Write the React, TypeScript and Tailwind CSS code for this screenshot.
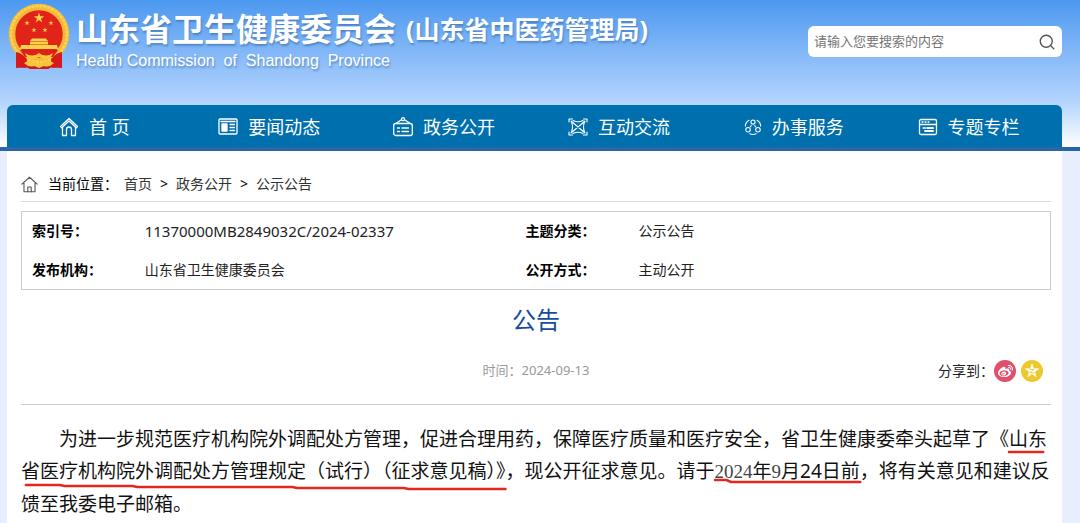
import type { ReactNode } from 'react';
import { Search } from 'lucide-react';
import { FaWeibo } from 'react-icons/fa';

interface NavItem {
    label: string;
    icon: ReactNode;
}

const iconProps = {
    viewBox: '0 0 20 20',
    fill: 'none',
    stroke: 'currentColor',
    strokeWidth: 1.3,
    strokeLinejoin: 'round' as const,
    strokeLinecap: 'round' as const,
    'aria-hidden': true,
};

const navItems: NavItem[] = [
    {
        label: '首 页',
        icon: (
            <svg {...iconProps} className="size-5">
                <path d="M1.5 9.5 10 1.5l8.500 8-1.200 1.200L10 4 2.700 10.700z" />
                <path d="M3.500 10.500v8h4v-6a2.500 2.500 0 0 1 5 0v6h4v-8" />
            </svg>
        ),
    },
    {
        label: '要闻动态',
        icon: (
            <svg {...iconProps} className="size-5">
                <rect x="1" y="2" width="18" height="15" rx="1" />
                <path d="M3 4.500h14" />
                <rect x="4" y="7" width="5" height="7" fill="currentColor" />
                <path d="M12 7.500h4.500M12 10.500h4.500M12 13.500h4.500" />
            </svg>
        ),
    },
    {
        label: '政务公开',
        icon: (
            <svg {...iconProps} className="size-5">
                <rect x="0.700" y="6.500" width="18.600" height="12" rx="2" />
                <path d="m3.500 6 5-3.200M16.500 6l-5-3.200" />
                <circle cx="10" cy="2.200" r="1.500" />
                <path d="M4.500 11h2M9 11h6.500M4.500 14.500h2M9 14.500h6.500" />
            </svg>
        ),
    },
    {
        label: '互动交流',
        icon: (
            <svg {...iconProps} className="size-5" strokeWidth={1.1}>
                <path d="m3 4 14 12M17 4 3 16M5 3.500q5 2.500 10 0M5 16.500q5-2.500 10 0M3.500 5q2 5 0 10M16.500 5q-2 5 0 10" />
                <path d="M1 5V2h3.500M15.500 2H19v3M19 15v3h-3.500M4.500 18H1v-3" />
            </svg>
        ),
    },
    {
        label: '办事服务',
        icon: (
            <svg {...iconProps} className="size-[18px]" strokeWidth={1.2}>
                <circle cx="10" cy="4.500" r="2.300" />
                <circle cx="4.500" cy="13" r="2.500" />
                <circle cx="15.500" cy="13" r="2.500" />
                <path d="M5.500 2.500Q1.500 5 1.500 9M14.500 2.500Q18.500 5 18.500 9M6.500 17.500q3.500 1.500 7 0M8 8.500 7 10M12 8.500l1 1.500" />
            </svg>
        ),
    },
    {
        label: '专题专栏',
        icon: (
            <svg {...iconProps} className="size-5">
                <rect x="1.500" y="2.500" width="17" height="15" rx="1.500" />
                <path d="M2 7.500h16M4 5h1M7 5h1M10 5h1M5 11h3" />
                <path d="M9.500 11H15M7 14h8" strokeWidth="2" />
            </svg>
        ),
    },
];

const crumbs = ['首页', '政务公开', '公示公告'];

const star = 'M0-1 .225-.309H.951L.363.118.588.809 0 .382-.588.809-.363.118-.951-.309H-.225z';

function Emblem() {
    return (
        <svg viewBox="0 0 62 68" className="h-[68px] w-[62px] shrink-0" role="img" aria-label="国徽">
            <circle cx="31" cy="31" r="25" fill="#e2231a" />
            <path d="M8 47l12 6h22l12-6v18l-10-1-4 2H22l-4-2-10 1z" fill="#d2161b" />
            <circle cx="31" cy="31" r="27" fill="none" stroke="#f3bb35" strokeWidth="6.500" />
            <circle cx="31" cy="31" r="28" fill="none" stroke="#fad25c" strokeWidth="2.500" strokeDasharray="3 1" />
            <g fill="#fbd24c">
                <path d={star} transform="translate(31 15) scale(5.500)" />
                <path d={star} transform="translate(19 20) scale(2.800)" />
                <path d={star} transform="translate(43 20) scale(2.800)" />
                <path d={star} transform="translate(26 27) scale(2.800)" />
                <path d={star} transform="translate(37 27) scale(2.800)" />
                <path d="M24 35.500h14l2 2.500H22zM22 38.500h18v3H22zM13 42h36l1 4H12z" />
            </g>
            <path d="M12 47h38l-5 7H17z" fill="#dc2119" />
            <path d="M8 49q6 1 11 7l-1 9-10-1zM54 49q-6 1-11 7l1 9 10-1z" fill="#d9181b" />
            <path d="M17 50q7 5 14 0 7 5 14 0-2 7-9 6l-5-2-5 2q-7 1-9-6z" fill="#f6c53a" />
            <path d="M16 60q6-4 11-1l4 2 4-2q5-3 11 1-5 5-10 3l-5 2-5-2q-5 2-10-3z" fill="#f6c53a" />
        </svg>
    );
}

// Text with a red marker stroke drawn under it
function Marked({ path, children }: { path: string; children: ReactNode }) {
    return (
        <span className="relative">
            {children}
            <svg
                viewBox="0 0 100 8"
                preserveAspectRatio="none"
                className="absolute top-full left-0 h-2 w-full overflow-visible"
                fill="none"
                aria-hidden="true"
            >
                <path d={path} stroke="#e3271c" strokeWidth="2.500" vectorEffect="non-scaling-stroke" strokeLinecap="round" />
            </svg>
        </span>
    );
}

function Header() {
    return (
        <header className="border-b-4 border-[#2c65a5] bg-linear-to-b from-[#4b98f0] via-[#b5d5fd] via-70% to-white">
            <div className="flex h-[105px] items-start justify-between pr-[18px] pl-2">
                <div className="flex gap-1.5 pt-[3px] text-white text-shadow-[1px_2px_2px_#3b6ca899]">
                    <Emblem />
                    <div className="pt-1">
                        <h1 className="flex items-center gap-2.5 text-[32px] leading-[44px] font-bold whitespace-nowrap">
                            山东省卫生健康委员会
                            <span className="text-[25px]">(山东省中医药管理局)</span>
                        </h1>
                        <p className="font-['Liberation_Sans'] text-base leading-5 whitespace-pre">
                            Health Commission  of  Shandong  Province
                        </p>
                    </div>
                </div>
                <form className="mt-[26px] flex h-[31px] w-[254px] items-center rounded-md bg-white px-1.5" role="search">
                    <input
                        type="text"
                        aria-label="搜索"
                        placeholder="请输入您要搜索的内容"
                        className="min-w-0 flex-1 text-[13px] outline-none placeholder:text-[#757575]"
                    />
                    <button type="button" aria-label="搜索">
                        <Search className="size-[18px] text-[#555]" strokeWidth={1.8} />
                    </button>
                </form>
            </div>
            <nav className="mr-[18px] ml-[7px] grid h-[42px] grid-cols-6 rounded-t-md bg-[#006fae] pt-0.5 pr-1.5 text-lg text-white">
                {navItems.map((item) => (
                    <a key={item.label} href="#" className="flex items-center justify-center gap-2.5 whitespace-nowrap">
                        {item.icon}
                        {item.label}
                    </a>
                ))}
            </nav>
        </header>
    );
}

function Breadcrumb() {
    return (
        <nav className="flex h-[51px] items-center border-b border-[#d9d9d9] pt-4 text-sm text-[#333]">
            <svg {...iconProps} className="mr-2.5 size-[17px] text-[#555]">
                <path d="m1 9.500 9-8 9 8M3.500 8v10.500h13V8" />
                <path d="M8 18.500v-5.500h4v5.500" />
            </svg>
            <span className="mr-1.5 text-black">当前位置：</span>
            <ol className="flex gap-2">
                {crumbs.map((crumb, i) => (
                    <li key={crumb} className="flex gap-2">
                        {i > 0 && <span className="text-black">&gt;</span>}
                        <a href="#">{crumb}</a>
                    </li>
                ))}
            </ol>
        </nav>
    );
}

function MetaTable() {
    return (
        <table className="mt-[9px] w-full table-fixed border border-[#ccc] text-left text-sm text-[#222]">
            <colgroup>
                <col className="w-[11%]" />
                <col className="w-[37%]" />
                <col className="w-[11%]" />
                <col />
            </colgroup>
            <tbody>
                <tr className="h-[39px]">
                    <th scope="row" className="pl-2.5 text-black">索引号：</th>
                    <td className="pl-2.5 text-[15px]">11370000MB2849032C/2024-02337</td>
                    <th scope="row" className="pl-2.5 text-black">主题分类：</th>
                    <td className="pl-2.5">公示公告</td>
                </tr>
                <tr className="h-[39px]">
                    <th scope="row" className="pl-2.5 text-black">发布机构：</th>
                    <td className="pl-2.5">山东省卫生健康委员会</td>
                    <th scope="row" className="pl-2.5 text-black">公开方式：</th>
                    <td className="pl-2.5">主动公开</td>
                </tr>
            </tbody>
        </table>
    );
}

export default function App() {
    return (
        <div className="min-h-screen bg-[#e8eefd] font-['Noto_Sans','Noto_Sans_CJK_SC',sans-serif]" lang="zh-CN">
            <Header />
            <main className="mr-[18px] ml-[7px] min-h-[calc(100vh-151px)] bg-white pr-[11px] pl-3.5">
                <Breadcrumb />
                <MetaTable />
                <article>
                    <h2 className="mt-3 text-center text-2xl leading-9 text-[#174b9e]">公告</h2>
                    <div className="mt-[22px] grid grid-cols-3 items-center border-b border-[#ccc] pb-[22px]">
                        <p className="col-start-2 text-center text-[13px] text-[#999]">时间：2024-09-13</p>
                        <div className="flex items-center justify-end pr-2 text-sm text-[#222]">
                            <span>分享到：</span>
                            <div className="flex gap-[5px]">
                                <button type="button" aria-label="分享到微博" className="flex size-[22px] items-center justify-center rounded-full bg-[#e0506b] text-white">
                                    <FaWeibo size={15} />
                                </button>
                                <button type="button" aria-label="分享到QQ空间" className="flex size-[22px] items-center justify-center rounded-full bg-[#ebc92f]">
                                    <svg viewBox="-1 -1 2 2" className="size-3.5" aria-hidden="true">
                                        <path d={star} fill="white" stroke="white" strokeWidth="0.100" strokeLinejoin="round" />
                                        <path d="M-.35-.22H.3L-.3.25H.35" fill="none" stroke="#ebc92f" strokeWidth="0.120" />
                                    </svg>
                                </button>
                            </div>
                        </div>
                    </div>
                    <p className="pt-[18px] indent-[2em] text-[19px] leading-8 text-[#111]">
                        为进一步规范医疗机构院外调配处方管理，促进合理用药，保障医疗质量和医疗安全，省卫生健康委牵头起草了《
                        <Marked path="M0 0H90">山东</Marked>
                        <Marked path="M1 1H8L9 2H23L24 3H56L57 4H79L80 5H100">省医疗机构院外调配处方管理规定（试行）（征求意见稿）》</Marked>
                        ，现公开征求意见。请于
                        <Marked path="M0 -4H8L11 -2H100">
                            <span className="font-['Liberation_Serif'] text-[#444]">2024</span>年
                            <span className="font-['Liberation_Serif'] text-[#444]">9</span>月24日前
                        </Marked>
                        ，将有关意见和建议反馈至我委电子邮箱。
                    </p>
                </article>
            </main>
        </div>
    );
}
